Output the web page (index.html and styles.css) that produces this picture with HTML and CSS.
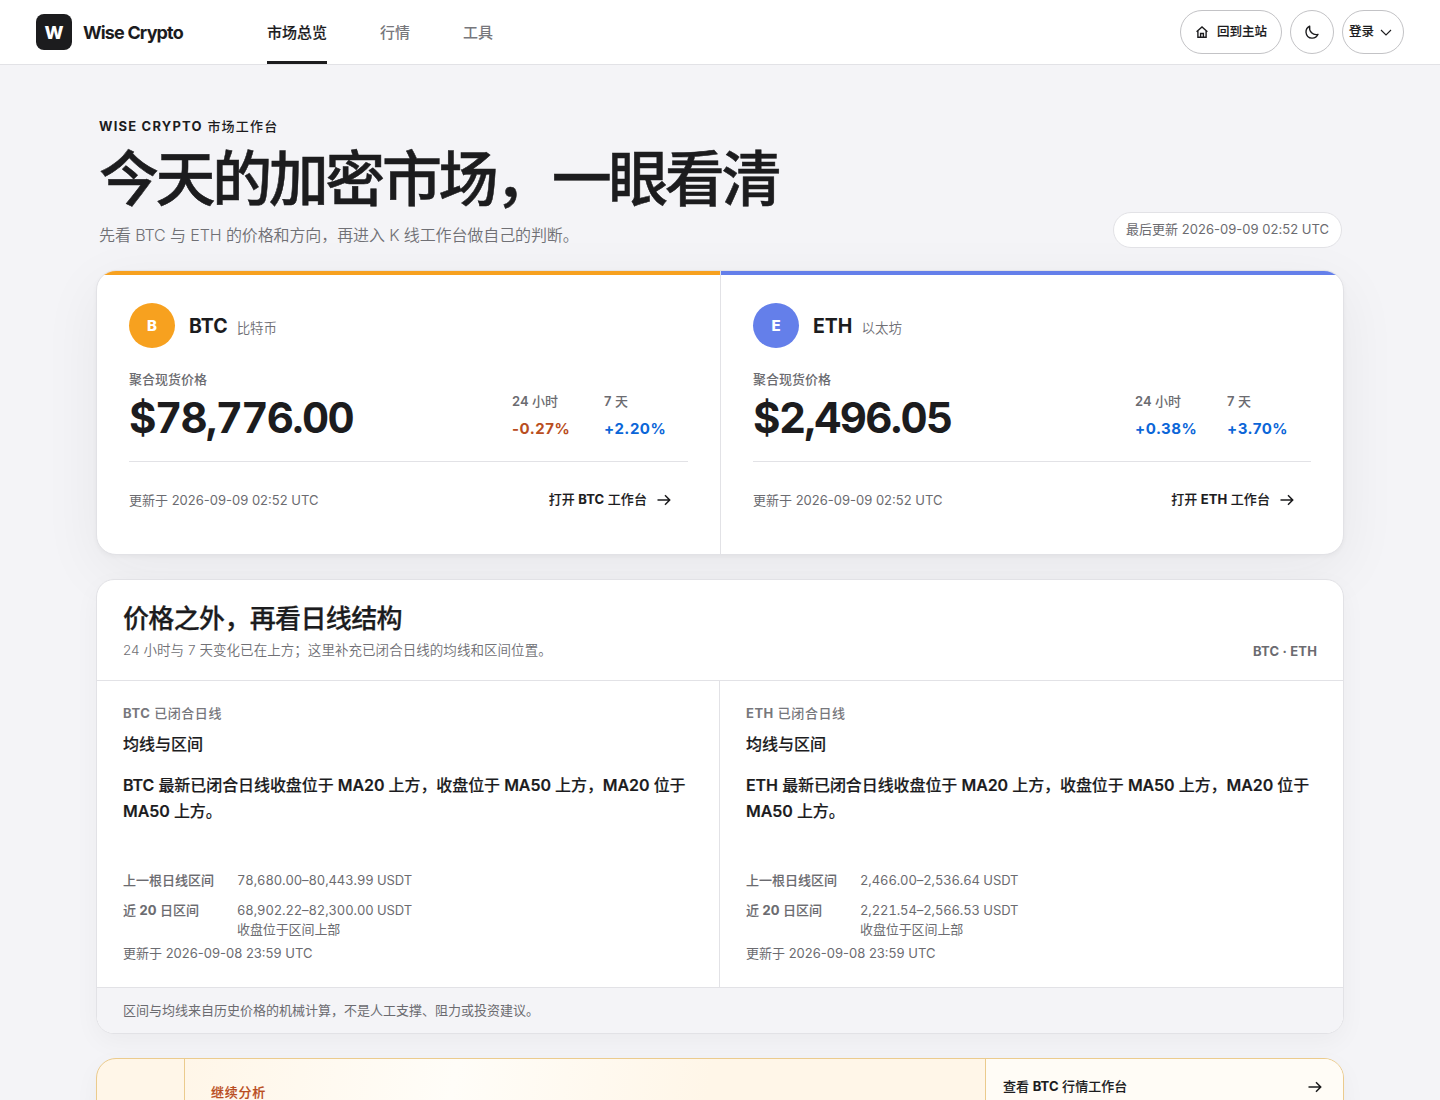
FILE: index.html
```html
<!DOCTYPE html>
<html lang="zh-CN">
<head>
    <meta charset="UTF-8">
    <meta name="viewport" content="width=device-width, initial-scale=1.0">
    <title>Wise Crypto</title>
    <link rel="stylesheet" href="styles.css">
</head>
<body>
    <header class="topbar">
        <a class="brand" href="#">
            <span class="brand-mark">W</span>
            <span class="brand-name">Wise Crypto</span>
        </a>
        <nav class="nav">
            <a class="active" href="#">市场总览</a>
            <a href="#">行情</a>
            <a href="#">工具</a>
        </nav>
        <div class="actions">
            <a class="pill home" href="#">
                <svg width="12" height="12" viewBox="0 0 12 12" fill="none" stroke="currentColor" stroke-width="1.4"><path d="M.6 5.700 6 1l5.400 4.700M1.900 4.800v6.500h8.200V4.800M4.600 11.300V7.500h2.800v3.800"/></svg>
                <span>回到主站</span>
            </a>
            <button class="pill round" type="button" aria-label="主题">
                <svg width="16" height="16" viewBox="0 0 24 24" fill="none" stroke="currentColor" stroke-width="2.100" stroke-linejoin="round"><path d="M8.500 3.200C4.800 5 2.800 8.500 3 12.500c.3 4.800 4 8.500 8.800 8.700 4 .2 7.600-2 9.200-5.700-7.500 2-14-4.500-12.500-12.300Z"/></svg>
            </button>
            <button class="pill login" type="button">
                <span>登录</span>
                <svg width="12" height="12" viewBox="0 0 12 12" fill="none" stroke="currentColor" stroke-width="1.100"><path d="m1 4 5 5 5-5"/></svg>
            </button>
        </div>
    </header>

    <main class="page">
        <section class="hero">
            <div>
                <p class="eyebrow"><b>WISE CRYPTO</b> 市场工作台</p>
                <h1>今天的加密市场，一眼看清</h1>
                <p class="lead">先看 BTC 与 ETH 的价格和方向，再进入 K 线工作台做自己的判断。</p>
            </div>
            <span class="updated">最后更新 2026-09-09 02:52 UTC</span>
        </section>

        <section class="prices">
            <article class="asset btc">
                <div class="asset-head">
                    <span class="coin">B</span>
                    <h2>BTC</h2>
                    <span class="asset-name">比特币</span>
                </div>
                <div class="quote">
                    <div>
                        <p class="label">聚合现货价格</p>
                        <p class="price">$78,776.00</p>
                    </div>
                    <dl class="changes">
                        <div><dt><b>24</b> 小时</dt><dd class="down">-0.27%</dd></div>
                        <div><dt><b>7</b> 天</dt><dd class="up">+2.20%</dd></div>
                    </dl>
                </div>
                <div class="asset-foot">
                    <span>更新于 2026-09-09 02:52 UTC</span>
                    <a class="open" href="#">
                        <span>打开 <b>BTC</b> 工作台</span>
                        <svg class="arrow" width="14" height="12" viewBox="0 0 14 12"><path d="M.5 6h12M8 1.300 12.700 6 8 10.700"/></svg>
                    </a>
                </div>
            </article>
            <article class="asset eth">
                <div class="asset-head">
                    <span class="coin">E</span>
                    <h2>ETH</h2>
                    <span class="asset-name">以太坊</span>
                </div>
                <div class="quote">
                    <div>
                        <p class="label">聚合现货价格</p>
                        <p class="price">$2,496.05</p>
                    </div>
                    <dl class="changes">
                        <div><dt><b>24</b> 小时</dt><dd class="up">+0.38%</dd></div>
                        <div><dt><b>7</b> 天</dt><dd class="up">+3.70%</dd></div>
                    </dl>
                </div>
                <div class="asset-foot">
                    <span>更新于 2026-09-09 02:52 UTC</span>
                    <a class="open" href="#">
                        <span>打开 <b>ETH</b> 工作台</span>
                        <svg class="arrow" width="14" height="12" viewBox="0 0 14 12"><path d="M.5 6h12M8 1.300 12.700 6 8 10.700"/></svg>
                    </a>
                </div>
            </article>
        </section>

        <section class="structure">
            <div class="structure-head">
                <div>
                    <h2>价格之外，再看日线结构</h2>
                    <p>24 小时与 7 天变化已在上方；这里补充已闭合日线的均线和区间位置。</p>
                </div>
                <span class="pair">BTC · ETH</span>
            </div>
            <div class="structure-grid">
                <article class="daily">
                    <p class="daily-label"><b>BTC</b> 已闭合日线</p>
                    <h3>均线与区间</h3>
                    <p class="summary"><b>BTC</b> 最新已闭合日线收盘位于 <b>MA20</b> 上方，收盘位于 <b>MA50</b> 上方，<b>MA20</b> 位于 <b>MA50</b> 上方。</p>
                    <dl class="ranges">
                        <dt>上一根日线区间</dt>
                        <dd>78,680.00–80,443.99 USDT</dd>
                        <dt>近 <b>20</b> 日区间</dt>
                        <dd>68,902.22–82,300.00 USDT<br>收盘位于区间上部</dd>
                    </dl>
                    <p class="time">更新于 2026-09-08 23:59 UTC</p>
                </article>
                <article class="daily">
                    <p class="daily-label"><b>ETH</b> 已闭合日线</p>
                    <h3>均线与区间</h3>
                    <p class="summary"><b>ETH</b> 最新已闭合日线收盘位于 <b>MA20</b> 上方，收盘位于 <b>MA50</b> 上方，<b>MA20</b> 位于 <b>MA50</b> 上方。</p>
                    <dl class="ranges">
                        <dt>上一根日线区间</dt>
                        <dd>2,466.00–2,536.64 USDT</dd>
                        <dt>近 <b>20</b> 日区间</dt>
                        <dd>2,221.54–2,566.53 USDT<br>收盘位于区间上部</dd>
                    </dl>
                    <p class="time">更新于 2026-09-08 23:59 UTC</p>
                </article>
            </div>
            <p class="note">区间与均线来自历史价格的机械计算，不是人工支撑、阻力或投资建议。</p>
        </section>

        <section class="next">
            <div class="next-mark"></div>
            <div class="next-body">
                <p>继续分析</p>
            </div>
            <div class="next-links">
                <a href="#">
                    <span>查看 <b>BTC</b> 行情工作台</span>
                    <svg class="arrow" width="14" height="12" viewBox="0 0 14 12"><path d="M.5 6h12M8 1.300 12.700 6 8 10.700"/></svg>
                </a>
            </div>
        </section>
    </main>
</body>
</html>
```
FILE: styles.css
```css
* {
    margin: 0;
    padding: 0;
    box-sizing: border-box;
}

body {
    font-family: Inter, "Noto Sans CJK SC", sans-serif;
    font-size: 13px;
    line-height: 1.5;
    color: #1c1c1e;
    background: #f4f4f7;
}

a {
    color: inherit;
    text-decoration: none;
}

b {
    font-weight: 700;
}

/* top bar */
.topbar {
    display: flex;
    align-items: center;
    height: 65px;
    padding: 0 36px;
    background: #fff;
    border-bottom: 1px solid #e2e2e6;
}

.brand {
    display: flex;
    align-items: center;
    gap: 11px;
    width: 231px;
}

.brand-mark {
    display: grid;
    place-items: center;
    width: 36px;
    height: 36px;
    border-radius: 8px;
    background: #1c1c1e;
    color: #fff;
    font-size: 18px;
    font-weight: 800;
}

.brand-name {
    font-size: 18px;
    font-weight: 700;
    letter-spacing: -0.047em;
}

.nav {
    display: flex;
    gap: 53px;
    height: 64px;
}

.nav a {
    display: flex;
    align-items: center;
    padding-top: 5px;
    border-bottom: 3px solid transparent;
    font-size: 15px;
    font-weight: 500;
    color: #77777c;
}

.nav .active {
    color: #1c1c1e;
    border-bottom-color: #1c1c1e;
    -webkit-text-stroke: 0.15px;
}

.actions {
    display: flex;
    gap: 8px;
    margin-left: auto;
}

.pill {
    display: flex;
    align-items: center;
    justify-content: center;
    height: 44px;
    border: 1px solid #c3c3c6;
    border-radius: 22px;
    background: #fff;
    color: #1c1c1e;
    font-family: inherit;
    font-size: 12.5px;
    font-weight: 500;
    line-height: 20px;
    -webkit-text-stroke: 0.15px;
}

.home {
    width: 102px;
    padding-left: 1px;
    gap: 9px;
}

.round {
    width: 44px;
}

.login {
    width: 62px;
    padding-right: 5px;
    gap: 6px;
}

/* hero */
.page {
    width: 1248px;
    margin: 0 auto;
}

.hero {
    display: flex;
    justify-content: space-between;
    align-items: flex-end;
    height: 205px;
    padding: 0 2px 22px;
}

.eyebrow {
    padding-left: 1px;
    font-weight: 500;
    letter-spacing: 0.092em;
    line-height: 20px;
}

h1 {
    font-size: 60px;
    font-weight: 500;
    line-height: 66px;
    letter-spacing: -0.057em;
    margin: 10px 0;
    padding-left: 1px;
    -webkit-text-stroke: 0.5px;
}

.lead {
    padding-left: 1px;
    font-size: 16px;
    font-weight: 350;
    line-height: 26px;
    letter-spacing: -0.007em;
    color: #707075;
}

.updated {
    height: 36px;
    padding: 0 12px;
    border: 1px solid #e2e2e6;
    border-radius: 18px;
    background: #fff;
    line-height: 33px;
    letter-spacing: 0.02px;
    color: #6b6b70;
}

/* prices */
.prices {
    display: grid;
    grid-template-columns: 624px 1fr;
    height: 285px;
    overflow: hidden;
    border: 1px solid #e2e2e6;
    border-radius: 20px;
    background: #fff;
    box-shadow: 0 16px 60px rgba(28, 28, 30, 0.06), 0 2px 5px rgba(28, 28, 30, 0.04);
}

.asset {
    padding: 32px 32px 0;
    background: linear-gradient(#f7a11f, #f7a11f) top / 100% 4px no-repeat;
}

.btc {
    border-right: 1px solid #e2e2e6;
    background-clip: padding-box;
}

.eth {
    background-image: linear-gradient(#647fea, #647fea);
}

.asset-head {
    display: flex;
    align-items: center;
    height: 46px;
}

.coin {
    display: grid;
    place-items: center;
    width: 46px;
    height: 45px;
    margin: 0 14px 1px 0;
    padding-top: 1px;
    border-radius: 50%;
    background: #f7a11f;
    color: #fff;
    font-size: 15px;
    font-weight: 800;
}

.eth .coin {
    background: #647fea;
}

.asset-head h2 {
    padding-top: 2px;
    font-size: 19.5px;
    font-weight: 750;
}

.asset-name {
    margin: 4px 0 0 9px;
    font-size: 13.5px;
    font-weight: 350;
    color: #707075;
}

.quote {
    display: flex;
    justify-content: space-between;
    height: 113px;
    padding-top: 20px;
    border-bottom: 1px solid #e2e2e6;
}

.label {
    font-weight: 500;
    line-height: 20px;
    color: #6b6b70;
}

.price {
    font-size: 42px;
    font-weight: 700;
    line-height: 58px;
    letter-spacing: -0.038em;
    font-variant-numeric: tabular-nums;
}

.changes {
    display: grid;
    grid-template-columns: 92px 84px;
    padding-top: 22px;
}

.changes dt {
    font-weight: 500;
    line-height: 20px;
    color: #6b6b70;
}

.changes dt b {
    font-weight: 600;
}

.changes dd {
    margin-top: 7px;
    font-size: 15px;
    font-weight: 700;
    line-height: 22px;
    letter-spacing: 0.035em;
}

.up {
    color: #0b66d8;
}

.down {
    color: #b94d21;
}

.asset-foot {
    display: flex;
    justify-content: space-between;
    align-items: flex-start;
    padding: 28px 17px 0 0;
    line-height: 20px;
    color: #6b6b70;
}

.open {
    display: flex;
    align-items: center;
    gap: 10px;
    margin-top: -1px;
    color: #1c1c1e;
    font-weight: 500;
    letter-spacing: 0.06px;
    -webkit-text-stroke: 0.1px;
}

.arrow {
    margin-top: 1px;
    fill: none;
    stroke: currentColor;
    stroke-width: 1.5;
}

/* daily structure */
.structure {
    margin-top: 24px;
    overflow: hidden;
    border: 1px solid #e2e2e6;
    border-radius: 18px;
    background: #fff;
    box-shadow: 0 8px 26px rgba(28, 28, 30, 0.04);
}

.structure-head {
    display: flex;
    justify-content: space-between;
    align-items: flex-end;
    height: 101px;
    padding: 0 26px 18px;
    border-bottom: 1px solid #e2e2e6;
}

.structure-head h2 {
    font-size: 26px;
    font-weight: 500;
    line-height: 36px;
    letter-spacing: -0.025em;
    -webkit-text-stroke: 0.25px;
}

.structure-head p {
    margin: 2px 0 1px;
    font-size: 13.5px;
    font-weight: 350;
    line-height: 22px;
    letter-spacing: 0.05px;
    color: #707075;
}

.pair {
    margin-bottom: 1px;
    font-weight: 700;
    line-height: 20px;
    letter-spacing: 0.15px;
    color: #6b6b70;
}

.structure-grid {
    display: grid;
    grid-template-columns: 1fr 1fr;
}

.daily {
    height: 306px;
    padding: 22px 26px 0;
}

.daily:first-child {
    border-right: 1px solid #e2e2e6;
}

.daily-label {
    font-weight: 500;
    line-height: 20px;
    letter-spacing: 0.04em;
    color: #77777c;
}

.daily h3 {
    margin-top: 9px;
    font-size: 16px;
    font-weight: 500;
    line-height: 24px;
    -webkit-text-stroke: 0.15px;
}

.summary {
    height: 86px;
    margin-top: 16px;
    font-size: 16px;
    font-weight: 500;
    line-height: 26px;
    letter-spacing: -0.005em;
    -webkit-text-stroke: 0.15px;
}

.summary b {
    font-weight: 600;
}

.ranges {
    display: grid;
    grid-template-columns: 114px 1fr;
    row-gap: 11px;
    margin-top: 13px;
    line-height: 19px;
    color: #6b6b70;
}

.ranges dt {
    font-weight: 500;
    -webkit-text-stroke: 0.1px;
}

.ranges dd {
    font-variant-numeric: tabular-nums;
    letter-spacing: -0.1px;
}

.time {
    margin-top: 4px;
    line-height: 20px;
    color: #6b6b70;
}

.note {
    height: 46px;
    padding: 0 26px;
    border-top: 1px solid #e2e2e6;
    background: #f4f4f7;
    line-height: 45px;
    color: #6b6b70;
}

/* continue */
.next {
    display: grid;
    grid-template-columns: 88px 801px 1fr;
    height: 150px;
    margin-top: 24px;
    overflow: hidden;
    border: 1px solid #ebcb8d;
    border-radius: 20px;
    background: #fff6e8;
    box-shadow: 0 8px 26px rgba(28, 28, 30, 0.04);
}

.next-mark,
.next-body {
    border-right: 1px solid #ebcb8d;
}

.next-body {
    padding: 23px 26px;
    background: linear-gradient(100deg, #fff6e8 0%, #fffdf8 33%, #fff6e8 64%);
}

.next-body p {
    font-weight: 500;
    line-height: 20px;
    letter-spacing: 0.06em;
    color: #b94d21;
    -webkit-text-stroke: 0.15px;
}

.next-links {
    padding: 17px 21px 0 17px;
    background: #fffcf6;
}

.next-links a {
    display: flex;
    align-items: center;
    justify-content: space-between;
    font-weight: 500;
    line-height: 20px;
    letter-spacing: 0.06px;
    -webkit-text-stroke: 0.1px;
}
```
